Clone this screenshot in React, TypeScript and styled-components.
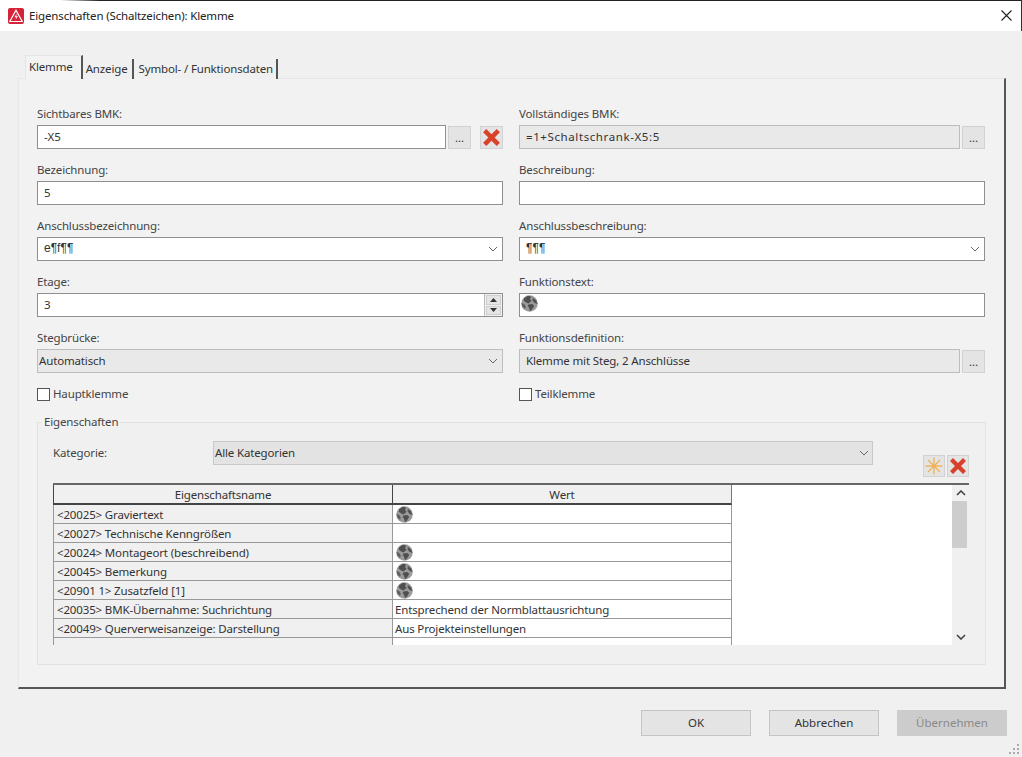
import styled, { createGlobalStyle } from "styled-components";

const GlobalStyle = createGlobalStyle`
  html, body { margin: 0; padding: 0; }
  body {
    width: 1022px;
    height: 757px;
    overflow: hidden;
    background: #f0f0f0;
    font-family: "Noto Sans", "Open Sans", sans-serif;
    font-size: 11.5px;
    letter-spacing: -0.15px;
    color: #2b2b2b;
  }
  * { box-sizing: border-box; }
`;

const Dialog = styled.div`
  width: 1022px;
  height: 757px;
  display: flex;
  flex-direction: column;
  position: relative;
`;

const TitleBar = styled.div`
  height: 31px;
  flex: none;
  background: #fff;
  display: flex;
  align-items: center;
  gap: 5px;
  padding: 0 9px 0 8px;
  border-right: 1px solid #333;
  position: relative;

  &::before {
    content: "";
    position: absolute;
    top: 0;
    left: 60px;
    right: 0;
    height: 1px;
    background: linear-gradient(to right, #fff, #222 40px);
  }
`;

const TitleText = styled.div`
  flex: 1;
  color: #222;
`;

const Main = styled.div`
  flex: 1;
  padding: 24px 16px 0 18px;
  display: flex;
  flex-direction: column;
`;

const TabBar = styled.div`
  height: 24px;
  display: flex;
  padding-left: 7px;
  align-items: flex-end;
  position: relative;
  z-index: 1;
  margin-bottom: -1px;
`;

const Tab = styled.div<{ $active?: boolean; $left?: number; $right?: number }>`
  height: ${p => (p.$active ? 24 : 20)}px;
  background: ${p => (p.$active ? "#f3f3f3" : "#f0f0f0")};
  border-right: 2px solid #555;
  border-left: ${p => (p.$active ? "1px solid #e4e4e4" : "none")};
  border-top: ${p => (p.$active ? "1px solid #e4e4e4" : "none")};
  padding: 0 ${p => p.$right ?? 4}px 2px ${p => p.$left ?? 2}px;
  margin-right: 1px;
  display: flex;
  align-items: center;
  white-space: nowrap;
  color: #333;
`;

const Panel = styled.div`
  height: 611px;
  background: #f2f2f2;
  border-top: 1px solid #e6e6e6;
  border-left: 1px solid #e8e8e8;
  border-right: 2px solid #555;
  border-bottom: 2px solid #555;
  padding: 29px 18px 0 18px;
`;

const FormGrid = styled.div`
  display: grid;
  grid-template-columns: 466px 466px;
  column-gap: 16px;
  row-gap: 15px;
`;

const Field = styled.div`
  display: flex;
  flex-direction: column;
  gap: 4px;
`;

const Label = styled.label`
  height: 13px;
  line-height: 11px;
  color: #444;
  white-space: nowrap;
`;

const Row = styled.div`
  display: flex;
  align-items: flex-end;
`;

const Input = styled.div<{ $disabled?: boolean; $grow?: boolean; $icon?: boolean }>`
  height: 24px;
  flex: ${p => (p.$grow ? 1 : "none")};
  width: ${p => (p.$grow ? "auto" : "100%")};
  border: 1px solid ${p => (p.$disabled ? "#bdbdbd" : "#8f8f8f")};
  background: ${p => (p.$disabled ? "#e9e9e9" : "#fff")};
  display: flex;
  align-items: ${p => (p.$icon ? "flex-start" : "center")};
  padding: ${p => (p.$icon ? "1px 1px" : "0 6px 2px")};
  color: #333;
  position: relative;
`;

const Select = styled(Input)`
  justify-content: space-between;
  padding-left: ${p => (p.$disabled ? 1 : 6)}px;
  padding-right: 4px;
`;

const Pilcrows = styled.span`
  font-family: "Liberation Sans", sans-serif;
  font-size: 12px;
  letter-spacing: 0;
`;

const WideText = styled.span`
  letter-spacing: 0.6px;
`;

const SmallButton = styled.button<{ $left?: number }>`
  width: 23px;
  height: 23px;
  flex: none;
  margin-left: ${p => p.$left ?? 2}px;
  padding: 0;
  border: 1px solid #d2d2d2;
  background: #e4e4e4;
  font: inherit;
  color: #333;
  display: flex;
  align-items: center;
  justify-content: center;
  line-height: 1;
`;

const Spinner = styled.div`
  position: absolute;
  right: 0;
  top: 0;
  bottom: 0;
  width: 18px;
  background: #f0f0f0;
  border-left: 1px solid #bdbdbd;
  display: flex;
  flex-direction: column;
  gap: 1px;
  padding: 1px;
`;

const SpinButton = styled.div`
  flex: 1;
  background: #e4e4e4;
  border: 1px solid #cfcfcf;
  display: flex;
  align-items: center;
  justify-content: center;
`;

const CheckRow = styled.div`
  height: 13px;
  display: flex;
  align-items: center;
  gap: 3px;
  color: #444;
`;

const CheckLabel = styled.span`
  line-height: 11px;
  margin-bottom: 2px;
`;

const Box = styled.span`
  width: 13px;
  height: 13px;
  border: 1px solid #555;
  background: #fff;
`;

const GroupBox = styled.fieldset`
  margin: 21px 0 0;
  padding: 0 16px 0 15px;
  height: 243px;
  border: 1px solid #e2e2e2;
  background: #f0f0f0;
  position: relative;
`;

const Legend = styled.div`
  position: absolute;
  top: -7px;
  left: 4px;
  padding: 0 2px;
  background: #f2f2f2;
  line-height: 11px;
  color: #444;
`;

const CategoryRow = styled.div`
  display: flex;
  align-items: center;
  padding-top: 18px;
  height: 42px;
`;

const CategoryLabel = styled.div`
  width: 160px;
  color: #444;
  padding-bottom: 2px;
`;

const CategorySelect = styled.div`
  width: 660px;
  height: 24px;
  background: #e3e3e3;
  border: 1px solid #c8c8c8;
  display: flex;
  align-items: center;
  justify-content: space-between;
  padding: 0 3px 2px 1px;
  color: #333;
`;

const ToolRow = styled.div`
  display: flex;
  justify-content: flex-end;
  gap: 2px;
  height: 22px;
  margin-top: -10px;
  margin-bottom: 6px;
`;

const ToolButton = styled.button`
  width: 22px;
  height: 22px;
  padding: 0;
  border: 1px solid #d2d2d2;
  background: #e4e4e4;
  display: flex;
  align-items: center;
  justify-content: center;
`;

const TableFrame = styled.div`
  height: 162px;
  display: flex;
  border-top: 2px solid #666;
  overflow: hidden;
  background: #fff;
`;

const TableArea = styled.div`
  width: 679px;
  flex: none;
`;

const WhiteFill = styled.div`
  flex: 1;
`;

const Scrollbar = styled.div`
  width: 17px;
  flex: none;
  background: #f0f0f0;
  display: flex;
  flex-direction: column;
  align-items: flex-start;
  position: relative;
`;

const ScrollArrow = styled.div`
  height: 16px;
  width: 100%;
  display: flex;
  align-items: center;
  justify-content: center;
`;

const ScrollThumb = styled.div`
  width: 15px;
  height: 47px;
  background: #cdcdcd;
`;

const ScrollSpace = styled.div`
  flex: 1;
`;

const TableGrid = styled.div`
  display: grid;
  grid-template-columns: 339px 340px;
  grid-template-rows: 20px;
  grid-auto-rows: 19px;
`;

const HeaderCell = styled.div`
  background: #f0f0f0;
  border-left: 1px solid #444;
  border-bottom: 2px solid #444;
  display: flex;
  align-items: center;
  justify-content: center;
  color: #333;

  &:nth-child(2) {
    border-right: 1px solid #777;
  }
`;

const NameCell = styled.div`
  background: #f0f0f0;
  border-left: 1px solid #999;
  border-bottom: 1px solid #999;
  display: flex;
  align-items: center;
  padding: 0 0 0 3px;
  color: #333;
  white-space: nowrap;
`;

const ValueCell = styled.div`
  background: #fff;
  border-left: 1px solid #999;
  border-bottom: 1px solid #999;
  border-right: 1px solid #999;
  display: flex;
  align-items: center;
  padding: 0 0 0 2px;
  color: #333;
  white-space: nowrap;

  svg {
    margin-left: 1px;
  }
`;

const Footer = styled.div`
  height: 68px;
  flex: none;
  display: flex;
  justify-content: flex-end;
  gap: 18px;
  padding: 21px 15px 0 0;
`;

const FootButton = styled.button<{ $disabled?: boolean }>`
  width: 110px;
  height: 26px;
  border: 1px solid ${p => (p.$disabled ? "#cccccc" : "#c4c4c4")};
  background: ${p => (p.$disabled ? "#cccccc" : "#e4e4e4")};
  color: ${p => (p.$disabled ? "#8a8a8a" : "#333")};
  font: inherit;
  padding: 0 0 2px;
`;

const Grip = styled.svg`
  position: absolute;
  right: 2px;
  bottom: 2px;
`;

const ChevronSvg = styled.svg`
  margin-top: 2px;
`;

const Globe = () => (
  <svg width="17" height="17" viewBox="0 0 16 16">
    <circle cx="8" cy="8" r="7.8" fill="#9a9a9a" />
    <path d="M3 3 6.5 .8 9.5 1.5 8.5 4 10 5.5 7 8 5 7 2.5 5.5Z" fill="#4f4f4f" />
    <path d="M7 9 10.5 8.5 12.5 10 10.5 13.5 8.5 15.2 7.5 11.8 6.2 10.3Z" fill="#4f4f4f" />
    <path d="M11 2.5 14 5 15.6 8.5 12.5 7.2 11 5Z" fill="#4f4f4f" />
    <path d="M.6 7.5 3 8.5 4.5 11 3.8 13 1.5 11Z" fill="#5c5c5c" />
  </svg>
);

const Chevron = () => (
  <ChevronSvg width="10" height="6" viewBox="0 0 10 6">
    <path d="M1 1 5 5 9 1" fill="none" stroke="#666" strokeWidth="1" />
  </ChevronSvg>
);

const ScrollChevron = ({ up }: { up?: boolean }) => (
  <svg width="10" height="6" viewBox="0 0 10 6">
    <path d={up ? "M1 5 5 1 9 5" : "M1 1 5 5 9 1"} fill="none" stroke="#444" strokeWidth="1.6" />
  </svg>
);

const Triangle = ({ up }: { up?: boolean }) => (
  <svg width="7" height="4" viewBox="0 0 7 4">
    <path d={up ? "M0 4 3.5 0 7 4Z" : "M0 0 3.5 4 7 0Z"} fill="#333" />
  </svg>
);

const RedCross = ({ size }: { size: number }) => (
  <svg width={size} height={size} viewBox="0 0 20 20">
    <path d="M2 5 5 2 10 7 15 2 18 5 13 10 18 15 15 18 10 13 5 18 2 15 7 10Z" fill="#d8412a" />
  </svg>
);

const Star = () => (
  <svg width="18" height="18" viewBox="0 0 18 18" stroke="#efb25a" strokeWidth="1.3">
    <path d="M9 0.5V17.5M0.5 9H17.5M3 3 15 15M15 3 3 15" fill="none" />
  </svg>
);

const AppLogo = () => (
  <svg width="16" height="16" viewBox="0 0 16 16">
    <rect width="16" height="16" rx="2" fill="#d5243a" />
    <path d="M8 2.2 14.2 13.5H1.8Z" fill="none" stroke="#fff" strokeWidth="1.2" />
    <path d="M8.8 5.5 6.5 9.2H8.4L7.4 12 10 8.3H8.2Z" fill="#fff" />
  </svg>
);

const CloseIcon = () => (
  <svg width="11" height="11" viewBox="0 0 11 11">
    <path d="M0.5 0.5 10.5 10.5M10.5 0.5 0.5 10.5" stroke="#222" strokeWidth="1.1" />
  </svg>
);

const rows: { name: string; value?: string; globe?: boolean }[] = [
  { name: "<20025> Graviertext", globe: true },
  { name: "<20027> Technische Kenngrößen" },
  { name: "<20024> Montageort (beschreibend)", globe: true },
  { name: "<20045> Bemerkung", globe: true },
  { name: "<20901 1> Zusatzfeld [1]", globe: true },
  { name: "<20035> BMK-Übernahme: Suchrichtung", value: "Entsprechend der Normblattausrichtung" },
  { name: "<20049> Querverweisanzeige: Darstellung", value: "Aus Projekteinstellungen" },
  { name: "" },
];

export default function App() {
  return (
    <Dialog>
      <GlobalStyle />
      <TitleBar>
        <AppLogo />
        <TitleText>Eigenschaften (Schaltzeichen): Klemme</TitleText>
        <CloseIcon />
      </TitleBar>
      <Main>
        <TabBar>
          <Tab $active $left={3} $right={8}>Klemme</Tab>
          <Tab>Anzeige</Tab>
          <Tab $left={4} $right={3}>Symbol- / Funktionsdaten</Tab>
        </TabBar>
        <Panel>
          <FormGrid>
            <Field>
              <Label>Sichtbares BMK:</Label>
              <Row>
                <Input $grow>-X5</Input>
                <SmallButton>...</SmallButton>
                <SmallButton $left={9}><RedCross size={21} /></SmallButton>
              </Row>
            </Field>
            <Field>
              <Label>Vollständiges BMK:</Label>
              <Row>
                <Input $grow $disabled><WideText>=1+Schaltschrank-X5:5</WideText></Input>
                <SmallButton>...</SmallButton>
              </Row>
            </Field>
            <Field>
              <Label>Bezeichnung:</Label>
              <Input>5</Input>
            </Field>
            <Field>
              <Label>Beschreibung:</Label>
              <Input />
            </Field>
            <Field>
              <Label>Anschlussbezeichnung:</Label>
              <Select><Pilcrows>e¶f¶¶</Pilcrows><Chevron /></Select>
            </Field>
            <Field>
              <Label>Anschlussbeschreibung:</Label>
              <Select><Pilcrows>¶¶¶</Pilcrows><Chevron /></Select>
            </Field>
            <Field>
              <Label>Etage:</Label>
              <Input>
                3
                <Spinner>
                  <SpinButton><Triangle up /></SpinButton>
                  <SpinButton><Triangle /></SpinButton>
                </Spinner>
              </Input>
            </Field>
            <Field>
              <Label>Funktionstext:</Label>
              <Input $icon><Globe /></Input>
            </Field>
            <Field>
              <Label>Stegbrücke:</Label>
              <Select $disabled>Automatisch<Chevron /></Select>
            </Field>
            <Field>
              <Label>Funktionsdefinition:</Label>
              <Row>
                <Input $grow $disabled>Klemme mit Steg, 2 Anschlüsse</Input>
                <SmallButton>...</SmallButton>
              </Row>
            </Field>
            <CheckRow><Box /><CheckLabel>Hauptklemme</CheckLabel></CheckRow>
            <CheckRow><Box /><CheckLabel>Teilklemme</CheckLabel></CheckRow>
          </FormGrid>
          <GroupBox>
            <Legend>Eigenschaften</Legend>
            <CategoryRow>
              <CategoryLabel>Kategorie:</CategoryLabel>
              <CategorySelect>Alle Kategorien<Chevron /></CategorySelect>
            </CategoryRow>
            <ToolRow>
              <ToolButton><Star /></ToolButton>
              <ToolButton><RedCross size={20} /></ToolButton>
            </ToolRow>
            <TableFrame>
              <TableArea>
                <TableGrid>
                  <HeaderCell>Eigenschaftsname</HeaderCell>
                  <HeaderCell>Wert</HeaderCell>
                  {rows.map((r, i) => [
                    <NameCell key={`n${i}`}>{r.name}</NameCell>,
                    <ValueCell key={`v${i}`}>{r.globe ? <Globe /> : r.value}</ValueCell>,
                  ])}
                </TableGrid>
              </TableArea>
              <WhiteFill />
              <Scrollbar>
                <ScrollArrow><ScrollChevron up /></ScrollArrow>
                <ScrollThumb />
                <ScrollSpace />
                <ScrollArrow><ScrollChevron /></ScrollArrow>
              </Scrollbar>
            </TableFrame>
          </GroupBox>
        </Panel>
      </Main>
      <Footer>
        <FootButton>OK</FootButton>
        <FootButton>Abbrechen</FootButton>
        <FootButton $disabled>Übernehmen</FootButton>
      </Footer>
      <Grip width="12" height="12" viewBox="0 0 12 12" fill="#aaa">
        <rect x="9" y="1" width="2" height="2" />
        <rect x="5" y="5" width="2" height="2" />
        <rect x="9" y="5" width="2" height="2" />
        <rect x="1" y="9" width="2" height="2" />
        <rect x="5" y="9" width="2" height="2" />
        <rect x="9" y="9" width="2" height="2" />
      </Grip>
    </Dialog>
  );
}
